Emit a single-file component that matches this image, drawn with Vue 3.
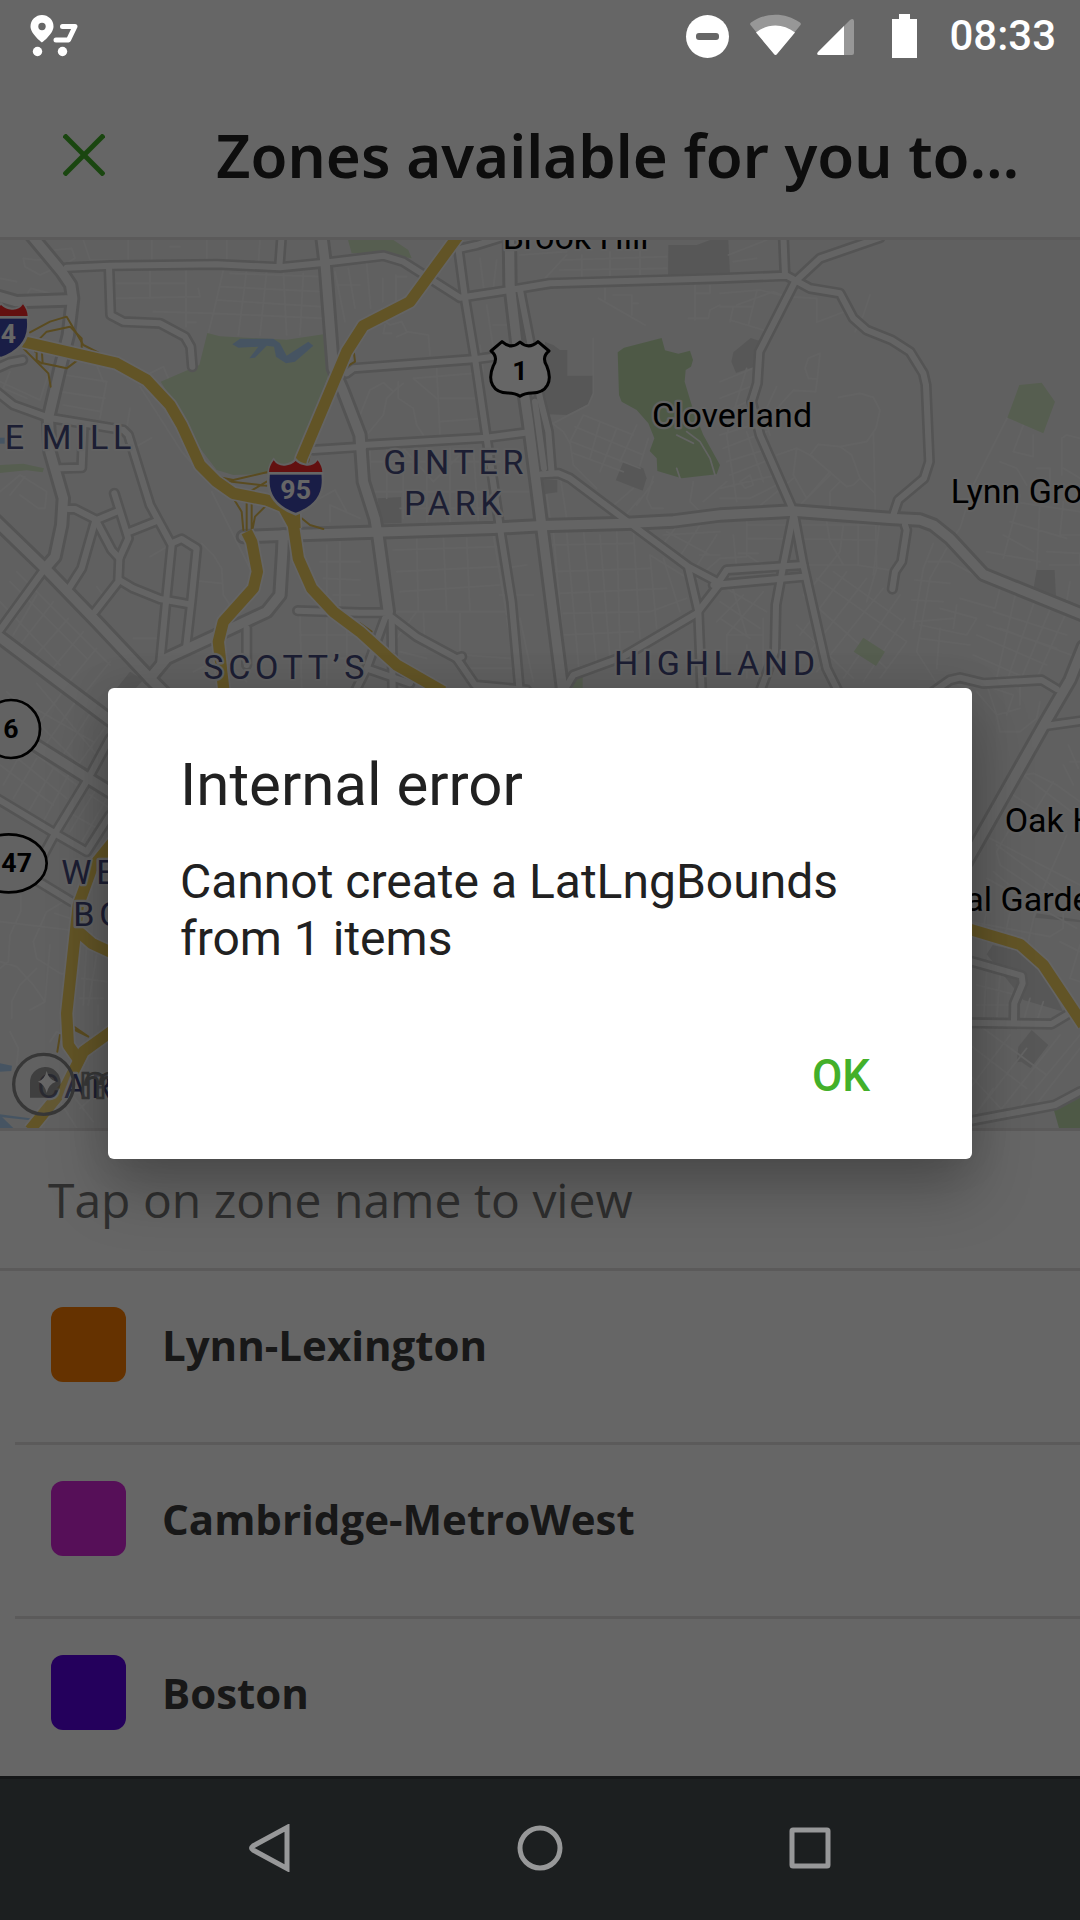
<template>
  <div class="device">
    <div class="screen">
      <div class="status-bar">
        <svg class="status-app" width="56" height="48" viewBox="24 12 56 48">
          <path d="M42 15a11.5 11.5 0 0 0-11.5 11.5C30.500 34 42 42.500 42 42.500S53.500 34 53.500 26.500A11.500 11.500 0 0 0 42 15z" fill="#fff"/>
          <circle cx="42" cy="26.500" r="3.700" fill="#666"/>
          <path d="M62.500 26.500H75L68.500 40H56" fill="none" stroke="#fff" stroke-width="5" stroke-linecap="round" stroke-linejoin="round"/>
          <circle cx="37.500" cy="51.500" r="4.700" fill="#fff"/>
          <circle cx="62.500" cy="51.500" r="4.700" fill="#fff"/>
        </svg>
        <svg class="status-icon" viewBox="681 12 64 48">
          <circle cx="707.500" cy="36.500" r="21.500" fill="#fff"/>
          <rect x="696" y="33" width="23" height="7" rx="3" fill="#666"/>
        </svg>
        <svg class="status-icon" viewBox="745 12 64 48">
          <path d="M750.500 25Q749.500 23.500 751 22.500C766 12 785 12 800 22.500Q801.500 23.500 800.500 25L777 54Q775.500 56 774 54z" fill="#fff" fill-opacity=".32"/>
          <path d="M756 32.500C768 23 783 23 795 32.500L777 54Q775.500 56 774 54z" fill="#fff"/>
        </svg>
        <svg class="status-icon" viewBox="809 12 64 48">
          <path d="M818 52L850 20Q853.500 17.500 854 21V53Q854 55 852 55H819Q816 54.500 818 52z" fill="#fff" fill-opacity=".32"/>
          <path d="M818 52L844 26V55H819Q816 54.500 818 52z" fill="#fff"/>
        </svg>
        <svg class="status-icon" viewBox="873 12 64 48">
          <path d="M899 14h11v5h7v39h-25V19h7z" fill="#fff"/>
        </svg>
        <span class="status-time">08:33</span>
      </div>

      <header class="app-bar">
        <button class="close-btn" type="button" aria-label="Close">
          <svg width="42" height="42" viewBox="0 0 42 42" fill="none" stroke="#43b02a" stroke-width="5">
            <line x1="1" y1="1" x2="41" y2="41"/>
            <line x1="41" y1="1" x2="1" y2="41"/>
          </svg>
        </button>
        <h1>Zones available for you to…</h1>
      </header>

      <div class="map">
        <svg viewBox="0 15 3240 2664" preserveAspectRatio="xMidYMid slice">
          <rect y="0" width="3240" height="2700" fill="#f0f0f0"/>

          <path v-for="(d, i) in blocks" :key="'b' + i" :d="d" fill="#dadada"/>
          <path v-for="(d, i) in woods" :key="'w' + i" :d="d" fill="#c2dfb0"/>

          <g class="lines">
            <path v-for="(d, i) in streets" :key="'s' + i" :d="d" class="street"/>
          </g>

          <path v-for="(d, i) in parks" :key="'p' + i" :d="d" fill="#d7eac8"/>
          <path v-for="(d, i) in water" :key="'r' + i" :d="d" fill="#afd3f5"/>

          <g class="lines">
            <path v-for="(d, i) in roads" :key="'rc' + i" :d="d" class="road-case"/>
            <path v-for="(d, i) in avenues" :key="'ac' + i" :d="d" class="avenue-case"/>
            <path v-for="(d, i) in roads" :key="'rf' + i" :d="d" class="road"/>
            <path v-for="(d, i) in avenues" :key="'af' + i" :d="d" class="avenue"/>
            <path v-for="(d, i) in ramps" :key="'x' + i" :d="d" class="ramp"/>
            <path v-for="(d, i) in highways" :key="'hc' + i" :d="d" class="highway-case"/>
            <path v-for="(d, i) in highways" :key="'hf' + i" :d="d" class="highway"/>
          </g>

          <text
            v-for="label in labels"
            :key="label.text"
            :x="label.x"
            :y="label.y"
            :class="['label', `label--${label.kind}`]"
          >{{ label.text }}</text>

          <!-- attribution logo -->
          <circle cx="131" cy="2548" r="90" fill="#fff" fill-opacity=".2" stroke="#8a8a8a" stroke-width="10"/>
          <path d="M90 2588V2545A46 46 0 1 1 136 2588z" fill="#666" fill-opacity=".6"/>
          <path d="M140 2508Q146 2534 168 2540Q146 2547 140 2574Q134 2547 114 2540Q134 2534 140 2508z" fill="#fff"/>
          <text x="240" y="2588" class="logo-text">m</text>

          <!-- interstate shields -->
          <g v-for="shield in interstates" :key="shield.text" :transform="`translate(${shield.x} ${shield.y})`">
            <path d="M-66 -78Q-54 -60 -32 -62Q-12 -64 0 -78Q12 -64 32 -62Q54 -60 66 -78Q84 -56 82 -8C80 38 48 68 0 86C-48 68 -80 38 -82 -8Q-84 -56 -66 -78z" fill="#3f49af" stroke="#f4f4f4" stroke-width="8"/>
            <path d="M-66 -76Q-54 -58 -32 -60Q-12 -62 0 -74Q12 -62 32 -60Q54 -58 66 -76Q80 -58 80 -40H-80Q-80 -58 -66 -76z" fill="#f72a2a"/>
            <rect x="-82" y="-41" width="164" height="8" fill="#fff"/>
            <text :x="shield.dx" y="40" class="shield-text shield-text--light">{{ shield.text }}</text>
          </g>

          <!-- US route shield -->
          <path d="M1506 320Q1534 345 1560 321Q1586 345 1614 320L1647 348Q1624 366 1640 392C1660 440 1640 474 1596 474Q1574 474 1560 484Q1546 474 1524 474C1480 474 1460 440 1480 392Q1496 366 1473 348z" fill="#fff" stroke="#000" stroke-width="9" stroke-linejoin="round"/>
          <text x="1560" y="434" class="shield-text">1</text>

          <!-- state routes -->
          <circle cx="33" cy="1482" r="87" fill="#f4f4f4" stroke="#000" stroke-width="8"/>
          <text x="33" y="1508" class="shield-text">6</text>
          <ellipse cx="26" cy="1885" rx="114" ry="87" fill="#f4f4f4" stroke="#000" stroke-width="8"/>
          <text x="50" y="1911" class="shield-text">47</text>
        </svg>
      </div>

      <p class="hint">Tap on zone name to view</p>

      <ul class="zones">
        <li v-for="zone in zones" :key="zone.name">
          <button class="zone" type="button">
            <span class="swatch" :style="{ background: zone.color }"></span>
            <span class="zone-name">{{ zone.name }}</span>
          </button>
        </li>
      </ul>

      <div v-if="open" class="scrim">
        <div class="dialog" role="alertdialog" aria-labelledby="dialog-title" aria-describedby="dialog-message">
          <h2 id="dialog-title">Internal error</h2>
          <p id="dialog-message">Cannot create a LatLngBounds from 1 items</p>
          <div class="dialog-actions">
            <button class="ok-btn" type="button" @click="open = false">OK</button>
          </div>
        </div>
      </div>
    </div>

    <nav class="nav-bar">
      <button type="button" aria-label="Back">
        <svg width="48" height="48" viewBox="0 0 48 48"><path d="M41 3.500V44.500L7 26Q4 24 7 22z"/></svg>
      </button>
      <button type="button" aria-label="Home">
        <svg width="48" height="48" viewBox="0 0 48 48"><circle cx="24" cy="24" r="20"/></svg>
      </button>
      <button type="button" aria-label="Recent apps">
        <svg width="48" height="48" viewBox="0 0 48 48"><rect x="6" y="6" width="36" height="36" rx="1"/></svg>
      </button>
    </nav>
  </div>
</template>

<script setup>
import { ref } from 'vue';

const open = ref(true);

const zones = [
  { name: 'Lynn-Lexington', color: '#fd7e00' },
  { name: 'Cambridge-MetroWest', color: '#d726dc' },
  { name: 'Boston', color: '#5a00e6' }
];

const labels = [
  { text: 'Brook Hill', x: 1508, y: 43, kind: 'town' },
  { text: 'Cloverland', x: 1956, y: 577, kind: 'town' },
  { text: 'Lynn Gro', x: 2852, y: 803, kind: 'town' },
  { text: 'Oak H', x: 3014, y: 1791, kind: 'town' },
  { text: 'al Garde', x: 2896, y: 2029, kind: 'town' },
  { text: 'E MILL', x: 14, y: 641, kind: 'area' },
  { text: 'GINTER', x: 1150, y: 716, kind: 'area' },
  { text: 'PARK', x: 1212, y: 840, kind: 'area' },
  { text: 'SCOTT’S', x: 610, y: 1332, kind: 'area' },
  { text: 'HIGHLAND', x: 1842, y: 1321, kind: 'area' },
  { text: 'WE', x: 184, y: 1946, kind: 'area' },
  { text: 'BO', x: 220, y: 2072, kind: 'area' },
  { text: 'CAR', x: 112, y: 2588, kind: 'area' }
];

const interstates = [
  { text: '95', x: 887, y: 752, dx: 0 },
  { text: '4', x: 3, y: 284, dx: 22 }
];

const parks = [
  'M622 294L660 304L860 314L970 298L985 420L905 650L860 715L700 720L650 705L600 640L545 540L482 440L598 390z',
  'M0 690L70 686L132 700L128 712L80 706L0 714z',
  'M1040 0H1158L1225 45L1235 70L1130 55L1055 55z',
  'M3058 450L3125 443L3165 500L3130 595L3022 548z',
  'M2590 1208L2655 1250L2628 1293L2561 1250z',
  'M1722 1330L1748 1326V1370H1715z'
];

const woods = [
  'M1853 352L1872 338L1985 309L1995 346L2035 356L2070 347L2079 375L2073 395L2057 405L2054 440L2078 520L2110 600L2160 690L2150 718L2045 730L1972 708L1970 670L1949 648L1963 610L1945 565L1910 525L1865 500L1857 480z',
  'M3160 2620L3240 2580V2690H3180z'
];

const blocks = [
  'M2005 30H2090L2130 15H2185L2190 115L2004 122z',
  'M1635 320L1660 330L1680 345H1702V422H1780V475L1765 508L1700 540L1640 538L1625 480z',
  'M1870 680L1930 700L1940 730L1928 767L1847 736z',
  'M1630 735H1672V772L1635 777z',
  'M1132 790L1203 786L1205 864L1146 866z',
  'M2200 352L2252 309L2280 318L2264 395L2208 414L2194 380z',
  'M3110 1005H3164L3168 1085L3100 1062z',
  'M390 1310L430 1335L380 1390L350 1360z',
  'M2978 2130L3065 2150L3125 2200L3190 2330L3070 2295L2960 2158z',
  'M3110 2035L3240 2055V2062L3105 2048z',
  'M3095 2385L3145 2430L3092 2500L3063 2480L3050 2482L3055 2435z'
];

const water = [
  'M697 328L720 311H820L840 325L860 362L925 320L940 332L885 380L858 385L828 365L822 335L800 332L765 368L748 370L775 335L715 338z',
  'M0 608H14V626H0z',
  'M0 2485L36 2492L34 2508L0 2510z',
  'M0 2640L40 2679H0z',
  'M0 2638L90 2650V2656L0 2646z'
];

const streets = [
  // west side
  'M340 190L600 185L595 160M450 105V190M350 145H560M558 105V275M460 230L640 235M560 262H588',
  'M670 105L640 235L625 294M690 115L960 125M660 155L965 170M650 195L960 215M640 235L970 250M740 105L715 300M800 110L780 300M850 110L860 300M910 115L900 300',
  'M250 15L270 75L530 80M385 15V75M455 15V80M510 35H540M620 15V80M680 15V85M780 15L775 85',
  'M70 70L75 95L120 120L165 100L150 70L110 75zM165 45L215 40L225 70L190 90M0 130L50 140M80 180L92 160L150 175L180 210',
  'M0 440L120 495L150 400M30 410L10 460L80 490M195 420L320 440L302 530L190 510M180 470L315 490M320 440L300 550M290 390L310 440M450 415L490 395L505 430',
  'M0 770L60 720L140 770L135 820H115L60 780M390 520L380 580M400 640L455 608M75 725L30 780M420 455L545 650L590 700M635 770L750 1000',
  'M0 1100L180 1290M30 1040L260 1270M50 1010L330 1290M60 1130L10 1190M110 1080L40 1200M160 1100L60 1230M205 1150L100 1270M250 1190L150 1310M290 1240L200 1350M330 1280L250 1380',
  'M605 925L640 960L665 1000L670 1080L690 1110M595 1038L665 1045M400 1210H470M450 965L510 930M290 1055L310 1080M580 1310L620 1290L660 1310M690 1290L740 1340',
  'M980 930V1080M1020 920V1130M960 980H1080M970 1030L1080 1035M1000 1080H1080M900 1140L905 1360M980 1140V1350M1040 1150V1330M900 1200H1080M930 1270H1080',
  'M1005 110L1035 260M1045 100L1065 220M1010 150H1080M960 790L1005 765L1040 830M990 860V810L1080 850',
  // north
  'M1100 85L1112 220M1148 130V200M1188 120V205M1188 125H1220M1130 240L1170 270L1205 260L1220 290L1285 300L1290 360M1190 305L1225 290M1155 270L1150 295L1175 295',
  'M1440 70L1455 190M1490 75L1480 160M1460 210L1480 340M1480 270H1520M1560 60L1700 50M1635 130L1700 60M1690 75L2000 65M1680 105L2000 100M1745 60V130M1830 50V125M1920 45V120',
  'M1100 600L1150 540L1160 490L1195 455M1080 540L1110 465L1150 443L1180 470L1210 445M1195 440V490L1240 520L1250 570L1270 600M1240 430L1310 490M1310 400L1320 600M1240 430L1420 415M1320 490H1440M1320 560L1450 550M1440 330L1450 410',
  'M1795 190L1935 270M1815 160V195M1895 180V240M1840 180H1895M1895 205H1915M1780 310V475L1765 510L1650 570M2085 150V255M2065 250H2125L2130 225L2160 210M2085 175H2130V150',
  'M1750 540L1710 620L1720 690L1790 760M1750 540L1900 600M1725 575L1930 660M1715 620L1920 700M1720 655L1870 710M1800 560L1770 670M1850 580L1800 710M1910 570L1860 680M1945 610L1920 690M1650 560L1690 590L1710 625',
  'M2060 590L2100 620L2130 670L2145 720M2030 600L2080 625M2030 700L2040 730M1960 725L1940 790L1955 820H1990M1910 810L1960 740M2080 740L2070 800L2110 840M1830 820L1900 760M1860 860L1920 790M2110 800L2180 740',
  // ginter park and south
  'M1110 640V860M1160 640V790M1210 640V850M1280 640V860M1350 640V860M1420 640L1435 860M1100 680H1500M1100 770H1600M1200 820H1500M1210 640L1300 740L1400 640M1640 780L1650 850M1680 720L1700 850',
  'M1180 945L1500 935M1190 1010L1500 995M1200 1070L1500 1050M1190 1130H1520M1250 910L1255 1130M1330 900L1340 1130M1400 910L1410 1130M1480 900L1520 1140M1270 1130L1275 1240M1380 1135V1310M1190 1210L1250 1130M1200 1250L1280 1270',
  'M1660 890L1700 1340M1700 890L1740 1340M1750 880L1790 1290M1800 900L1830 1270M1850 870L1860 1240M1900 880L1920 1210M1950 960L1970 1180M1990 970L2040 1130M1650 930L1900 925M1660 1010L1950 1000M1680 1075L2000 1060M1690 1135L1950 1130L2060 1090M1690 1200L1900 1190',
  'M1520 1150L1560 1340M1560 1150L1600 1340M1500 1080H1600M1510 1000L1580 990M1400 1300H1560M1390 1260L1530 1270M1160 1270L1240 1320M1200 1330L1290 1360',
  'M1950 960L2080 1040L2160 970M2000 890L2130 960M1980 940L2040 860M2030 980L2100 870M2080 1010L2150 900M2100 960H2160M1990 900L2160 890',
  // east side
  'M2185 60L2300 15M2200 80L2270 70M2210 210L2320 170L2360 185M2160 175L2280 165L2360 185L2450 190V262L2560 220M2160 215H2260M2190 255L2290 285M2200 215L2190 260M2270 170L2245 270M2610 180L2590 240L2565 290',
  'M2160 440L2260 400M2160 490L2250 455M2160 540L2240 500M2240 400L2180 600M2330 455L2290 540L2310 600M2460 355L2425 370L2415 400L2425 430L2452 432zM2452 432L2447 470L2380 466L2340 510L2300 580M2515 487L2580 475L2620 487L2640 525L2628 580L2600 620L2520 635L2455 628L2430 660L2540 755L2560 750L2580 730M2520 635L2555 660L2580 730L2625 775M2620 590L2625 780L2630 1000L2600 1100',
  'M2160 600L2290 560M2170 640L2300 590M2180 680L2310 640M2190 720L2320 670M2160 760L2330 720M2160 790L2250 790L2340 745M2180 600L2210 800M2240 590L2290 740M2220 740L2250 720L2260 750L2235 760zM2330 660L2390 640L2440 665M2390 640L2380 720L2420 790L2490 710M2270 820L2380 730M2400 810L2490 720M2490 820V770L2520 740',
  'M2240 850V960L2350 1030M2240 910L2630 915M2240 870H2630M2480 860L2490 920L2530 990M2575 860V990M2530 870L2520 950L2440 1050M2410 990H2570L2700 1010M2640 850L2620 1020',
  'M2410 1080L2660 1300M2450 1030L2720 1220M2500 1010L2710 1160M2390 1170L2560 1330M2540 1010L2400 1200M2600 1030L2430 1250M2650 1060L2450 1310M2700 1080L2530 1330M2715 1150L2590 1340M2720 1220L2640 1330',
  'M2160 1050L2300 1130M2160 1100L2280 1180M2160 1150L2250 1210M2180 1000L2240 1200M2200 900L2210 1000M2160 970L2240 965M2215 955H2275M2230 1080L2150 1160M2290 1070L2180 1200V1330M2180 1200H2290M2240 1230V1330M2290 1150V1330',
  'M2800 925L2770 1000L2740 1180M2785 980H2850L3000 1060L2985 1120L2880 1090M2840 940L2790 1030L2750 1250L2820 1360M2745 1035L2850 1045M2735 1095L2830 1100M2740 1160L2860 1150M2820 1120L2930 1150L2900 1200L2760 1170M2870 1110L2860 1180M2820 1180L2810 1300M2760 1210L2910 1230',
  'M3022 548L2920 750L2880 880L2850 920M3070 570L3040 650L3100 665V600M3000 680L3050 700L3080 750M3110 700H3150V800M3185 720V610L3200 600L3240 610M3190 700L3240 730M3040 800L3240 830M3030 860L3200 910M3010 900L3100 950M2960 950L3120 980M3060 780L3010 970M3120 790L3110 1000M3190 800L3180 900H3240M3140 950L3240 955V990H3150',
  'M2930 1200L3140 1290M2980 1130L3200 1200M2960 1170L3170 1240M2920 1260L3080 1330M3050 1060L2990 1330M3110 1080L3020 1340M3160 1100L3060 1340M3200 1130L3110 1330M3210 1040L3200 1100M3000 1180L3240 1270',
  // south east
  'M2930 1370L2990 1440L3000 1490L3060 1490L3110 1450L3120 1400M2960 1350L2990 1440L3060 1420M2980 1360L3040 1380L3020 1440M3060 1340V1410M3070 1620L3100 1615L3170 1650L3240 1700M3070 1620L3240 1750M3040 1680L3200 1790M2990 1830L3180 1970M2970 1810L3240 1950M3030 1780L2990 1850L3000 1890L3150 1990M3160 1640L3060 1800M3190 1590L3220 1650M3205 1530L3235 1600M3210 1580H3240M3200 1800L3130 1960',
  'M2960 1930L3230 2080M2980 1910L3100 2010M2910 2060L3150 2105L3190 2080V2030M2970 1970L2950 2080M3040 1990L3010 2120M3110 2010L3080 2140M3180 2120L3240 2150M3210 2230L3240 2240M3240 2130L3210 2230',
  'M2930 2250L3050 2280M2960 2210L2950 2360M3000 2215L2990 2360M2930 2310H3040M3090 2290L3070 2360M3130 2300L3110 2360M2910 2520L3020 2640M2910 2430L3080 2560M2950 2380L3140 2520M2910 2560L3030 2400M2940 2620L3080 2440M2990 2640L3180 2400M3040 2640L3240 2400M3100 2620L3240 2440M2920 2650L2980 2560',
  // south west
  'M150 1345L320 1470M110 1345L290 1560M200 1355L90 1500M240 1380L130 1540M280 1420L170 1590M320 1470L220 1610M70 1400L280 1520M20 1370L250 1600',
  'M0 1590L160 1710M40 1560L200 1690M90 1545L230 1650M60 1560L10 1650M110 1570L40 1690M160 1600L80 1740M205 1620L130 1760M290 1660L210 1790M320 1690L240 1830M270 1680L330 1720M220 1740L310 1790',
  'M0 2060L210 2085M62 1980V2030L30 2100L25 2180L0 2200M190 2000L140 2030L100 2120L110 2170L180 2215L215 2220M0 2180L50 2195L100 2250L135 2300M110 2200L60 2250L35 2300V2350M210 2050L165 2035M150 2130L135 2300L90 2325M30 2390L55 2440L50 2490M150 2420L170 2390L190 2400M260 2120L250 2310M290 2160L265 2310M245 2230L320 2240M240 2290H310M295 2310V2370M210 2570L280 2660M180 2600L230 2679M240 2620L330 2540'
];

const roads = [
  'M200 98L330 92L650 88L840 97L960 85L1150 62L1210 80L1320 150L1380 188L1530 165L1650 145L2160 130L2360 122L2430 160L2520 175L2560 250L2600 285L2675 315L2730 350L2770 415L2778 450L2788 680L2772 730L2695 795L2675 855',
  'M327 95L332 240L370 260L480 265L555 305L572 335L577 395',
  'M845 0L838 95',
  'M-10 400L30 382L68 375',
  'M-10 470L40 510L145 548L370 585L385 600L450 810L515 930L500 1080L480 1290',
  'M180 700L245 698L250 575',
  'M205 822H225L290 855L355 828',
  'M343 775L385 910L358 970L355 1040L285 1130',
  'M290 860L335 945L358 970',
  'M285 860L245 1000L210 1055',
  'M358 1035L400 1060L480 1092L570 1108',
  'M385 892L470 858',
  'M515 925L545 912L590 940L575 1090L558 1240',
  'M0 1185L135 1000',
  'M740 1180V1290',
  'M940 645L1090 635',
  'M893 1127L1080 1133H1150',
  'M1040 415L1060 400L1430 372L1480 365',
  'M1090 630L1460 608L1575 593',
  'M1385 40L1430 30L1510 5',
  'M1375 40L1395 190L1425 370L1460 610L1500 880L1535 1100L1560 1380',
  'M1560 165L1590 320L1620 490L1645 590L1655 715',
  'M1605 500L1632 700',
  'M1625 718L1675 715L1710 730L1870 850L2065 995L2160 1045',
  'M2065 1000L2095 1130L2105 1370',
  'M2160 1045L2090 1135L1870 1265L1720 1320L1690 1370',
  'M1165 1140L1250 1205L1370 1270L1425 1350L1580 1365',
  'M1370 1270L1385 1265',
  'M1175 1150L1178 1370',
  'M1155 1150L1100 1300L1060 1380',
  'M1100 1300L1230 1345',
  'M2350 0L2355 120',
  'M2640 8L2460 70L2385 140L2278 350L2272 445L2255 500L2280 600L2380 828L2410 990L2480 1300L2520 1380',
  'M2380 840L2350 990L2328 1110L2325 1250L2280 1370',
  'M2150 1050L2180 1005L2410 990',
  'M2140 1050L2410 1025',
  'M2715 870L2720 885L2705 980L2685 1010L2677 1062',
  'M2800 1370L2850 1335L2880 1328L2950 1345L3125 1335L3170 1362',
  'M3140 1472L3240 1458',
  'M2900 2175L3065 2222L3068 2245L3043 2305L3042 2360',
  'M2900 2363L3155 2367L3205 2337',
  'M2900 2660L3165 2610L3240 2570',
  'M330 1510L265 1630L165 1795L130 1860',
  'M-10 1690L165 1795L260 1850L330 1740',
  'M100 1930L215 2000'
];

const avenues = [
  'M85 -10L185 110L212 150L218 190L205 300L180 400L145 550L150 650L190 790L185 870L165 965L135 1000',
  'M-20 180L50 200L200 195',
  'M-20 850L135 1000L290 1160L450 1330L540 1420',
  'M-20 1192L170 1335L330 1455',
  'M450 1330L500 1270L640 1205L800 1130L840 1080L848 950L850 900',
  'M965 0L975 80L1000 400L1030 470L1080 600L1090 740L1125 850L1135 910L1165 1130',
  'M730 905L860 900L1080 893L1480 880L1625 872L1880 865L2020 858L2160 840L2380 828L2670 850L2760 855L2800 870L2850 910L2950 1018L3250 1140',
  'M1528 0L1530 150L1550 320L1585 560L1625 872L1690 1380',
  'M3250 1235L3210 1335L3140 1455L2900 1880',
  'M90 1520L265 1630L330 1670'
];

const highways = [
  'M70 320L350 385L440 435L510 510L545 570L600 690L650 740L700 775L800 795L850 815L880 870L895 970L935 1060L1000 1130L1080 1190L1190 1290L1330 1370',
  'M1380 -5L1230 200L1090 272L1040 350L905 670L880 780L885 880',
  'M740 890L755 920L772 1010L760 1060L670 1160L655 1220L672 1370',
  'M340 1820L275 1900L235 2010L200 2335L205 2430L240 2480',
  'M230 2085L275 2125L340 2155',
  'M340 2385L250 2450L200 2550L90 2685',
  'M2900 2080L3060 2128L3130 2190L3250 2370'
];

const ramps = [
  'M90 292L150 260L200 245L250 330L300 355',
  'M105 350L120 310L140 290L210 275L245 310V340',
  'M70 340L145 415L152 455',
  'M125 340L128 385L165 392L200 400L240 370M110 330V375L125 385',
  'M650 725L700 735L800 712M650 735L800 752M660 740L740 775L800 740M740 800V885M755 800V885M700 790L725 830L730 885M800 810L765 845L757 885',
  'M905 850L930 870L970 882M940 600L925 680M1040 395L1065 380L1062 355L1045 355',
  'M1080 1165L1115 1190M1180 1255L1200 1285',
  'M215 2370L265 2405L225 2385M180 2400L172 2450'
];
</script>

<style>
body {
  margin: 0;
  background: #1c1f20;
}
</style>

<style scoped>
.device {
  display: flex;
  flex-direction: column;
  min-height: 100vh;
  font-family: "Open Sans", "Noto Sans", sans-serif;
}

.screen {
  position: relative;
  flex: 1;
  display: flex;
  flex-direction: column;
  background: #fff;
}

button {
  padding: 0;
  border: none;
  background: transparent;
  font-family: inherit;
  cursor: pointer;
}

/* Status bar stays above the scrim */
.status-bar {
  position: relative;
  z-index: 2;
  display: flex;
  align-items: center;
  height: 72px;
  padding: 0 24px;
  color: #fff;
}

.status-app {
  margin-right: auto;
}

.status-icon {
  width: 64px;
  height: 48px;
}

.status-time {
  margin-left: 12px;
  font-family: Roboto, sans-serif;
  font-size: 42px;
  font-weight: 500;
  line-height: 50px;
}

.app-bar {
  display: flex;
  align-items: center;
  height: 165px;
  border-bottom: 3px solid #e4e2e0;
}

.close-btn {
  display: flex;
  align-items: center;
  justify-content: center;
  width: 168px;
  height: 168px;
}

.app-bar h1 {
  margin: 0 0 0 48px;
  font-family: "Noto Sans", "Open Sans", sans-serif;
  font-size: 60px;
  font-weight: 600;
  line-height: 82px;
  color: #212121;
  white-space: nowrap;
}

.map {
  position: relative;
  flex: 1;
  min-height: 888px;
  overflow: hidden;
  border-bottom: 3px solid #e4e2e0;
}

.map svg {
  position: absolute;
  width: 100%;
  height: 100%;
}

.lines path {
  fill: none;
  stroke-linecap: round;
  stroke-linejoin: round;
}

.lines .street { stroke: #f8f8f8; stroke-width: 5; }
.lines .road-case { stroke: #d2d2d2; stroke-width: 34; }
.lines .road { stroke: #fbfbfb; stroke-width: 18; }
.lines .avenue-case { stroke: #d2d2d2; stroke-width: 46; }
.lines .avenue { stroke: #fbfbfb; stroke-width: 28; }
.lines .ramp { stroke: #e0bc50; stroke-width: 6; }
.lines .highway-case { stroke: #fafafa; stroke-width: 44; stroke-linecap: butt; }
.lines .highway { stroke: #f6d25f; stroke-width: 34; stroke-linecap: butt; }

.label {
  font-family: Roboto, sans-serif;
  font-size: 102px;
  paint-order: stroke;
  stroke: #f4f4f4;
  stroke-width: 14px;
  stroke-linejoin: round;
}

.label--town { fill: #000; }

.label--area {
  fill: #464b80;
  letter-spacing: 14px;
}

.shield-text {
  font-family: Roboto, sans-serif;
  font-size: 80px;
  font-weight: 700;
  text-anchor: middle;
}

.shield-text--light { fill: #fff; }

.logo-text {
  font-family: Roboto, sans-serif;
  font-size: 140px;
  font-weight: 500;
  fill: #fff;
  fill-opacity: 0.5;
  stroke: #8a8a8a;
  stroke-width: 8px;
}

.hint {
  margin: 0;
  padding: 36px 48px 35px;
  border-bottom: 3px solid #e4e2e0;
  font-size: 48px;
  line-height: 66px;
  color: #757575;
}

.zones {
  margin: 0;
  padding: 0 0 0 15px;
  list-style: none;
}

.zones li {
  border-bottom: 3px solid #e4e2e0;
}

.zones li:last-child {
  border-bottom: none;
}

.zone {
  display: flex;
  align-items: center;
  gap: 36px;
  width: 100%;
  padding: 36px 36px 60px;
}

.zones li:last-child .zone {
  padding-bottom: 46px;
}

.swatch {
  width: 75px;
  height: 75px;
  border-radius: 12px;
}

.zone-name {
  font-size: 42px;
  font-weight: 700;
  line-height: 58px;
  color: #3c3c3c;
}

.scrim {
  position: absolute;
  inset: 0;
  z-index: 1;
  display: flex;
  align-items: center;
  justify-content: center;
  padding-top: 71px;
  background: rgba(0, 0, 0, 0.6);
}

.dialog {
  box-sizing: border-box;
  width: 80%;
  padding: 62px 72px 34px;
  border-radius: 6px;
  background: #fff;
  box-shadow: 0 30px 60px rgba(0, 0, 0, 0.25), 0 0 40px rgba(0, 0, 0, 0.1);
  font-family: Roboto, sans-serif;
  color: #212121;
}

.dialog h2 {
  margin: 0;
  font-size: 60px;
  font-weight: 400;
  line-height: 70px;
}

.dialog p {
  margin: 33px 0 60px;
  font-size: 48px;
  line-height: 57px;
}

.dialog-actions {
  display: flex;
  justify-content: flex-end;
}

.ok-btn {
  padding: 24px 30px;
  font-size: 44px;
  font-weight: 500;
  line-height: 50px;
  color: #43b02a;
}

.nav-bar {
  display: flex;
  justify-content: center;
  height: 144px;
  background: #1c1f20;
  box-shadow: inset 0 3px #151718;
}

.nav-bar button {
  display: flex;
  align-items: center;
  justify-content: center;
  width: 25%;
}

.nav-bar svg {
  fill: none;
  stroke: #979899;
  stroke-width: 5;
}
</style>
